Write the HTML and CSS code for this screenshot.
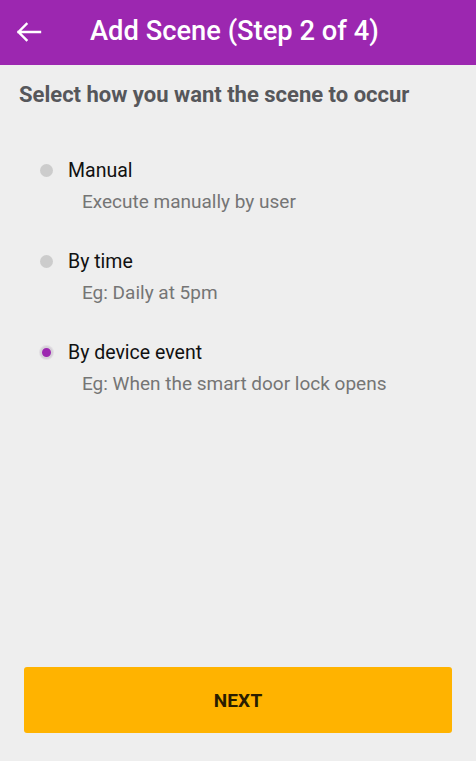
FILE: index.html
```html
<!DOCTYPE html>
<html>
<head>
<meta charset="utf-8">
<link rel="stylesheet" href="styles.css">
</head>
<body>
<div class="app">
  <header class="topbar">
    <svg class="back" width="28" height="24" viewBox="0 0 28 24">
      <path d="M3.5 12H25M11.5 4L3.5 12L11.5 20" fill="none" stroke="#fff" stroke-width="2.4" stroke-linecap="square"/>
    </svg>
    <h1 class="title">Add Scene (Step 2 of 4)</h1>
  </header>
  <main class="content">
    <h2 class="prompt">Select how you want the scene to occur</h2>
    <div class="options">
      <div class="option">
        <span class="radio"></span>
        <div class="texts">
          <div class="label">Manual</div>
          <div class="desc">Execute manually by user</div>
        </div>
      </div>
      <div class="option">
        <span class="radio"></span>
        <div class="texts">
          <div class="label">By time</div>
          <div class="desc">Eg: Daily at 5pm</div>
        </div>
      </div>
      <div class="option">
        <span class="radio checked"></span>
        <div class="texts">
          <div class="label">By device event</div>
          <div class="desc">Eg: When the smart door lock opens</div>
        </div>
      </div>
    </div>
  </main>
  <footer class="footer">
    <button class="next">NEXT</button>
  </footer>
</div>
</body>
</html>
```
FILE: styles.css
```css
* { box-sizing: border-box; }
html, body { margin: 0; padding: 0; }
body {
  background: #eeeeee;
  font-family: Roboto, "Noto Sans", sans-serif;
  width: 476px;
  height: 761px;
  overflow: hidden;
}
.app {
  display: flex;
  flex-direction: column;
  height: 761px;
}
.topbar {
  height: 65px;
  background: #9c27b0;
  display: flex;
  align-items: center;
  padding-left: 15px;
}
.back { display: block; margin-top: -2px; }
.title {
  margin: -4px 0 0 47px;
  color: #fff;
  font-size: 27.3px;
  font-weight: 500;
  line-height: 32px;
}
.content {
  flex: 1;
  padding: 16px 19px 0 19px;
}
.prompt {
  margin: 0;
  font-size: 22px;
  font-weight: 700;
  color: #56575b;
  line-height: 28px;
}
.options {
  display: flex;
  flex-direction: column;
  gap: 35px;
  margin-top: 49px;
  padding-left: 21px;
}
.option {
  display: flex;
  align-items: flex-start;
}
.radio {
  width: 13px;
  height: 13px;
  border-radius: 50%;
  background: #cccccc;
  margin-top: 6px;
  flex: none;
}
.radio.checked {
  background: #9c27b0;
  border: 2px solid #d6d0d8;
  box-shadow: 0 0 0 1px #e2dfe3;
}
.texts { margin-left: 15px; }
.label {
  font-size: 19.5px;
  color: #111;
  line-height: 26px;
}
.desc {
  margin-top: 6px;
  margin-left: 14px;
  font-size: 19px;
  color: #757575;
  line-height: 24px;
}
.footer {
  padding: 0 24px 28px 24px;
}
.next {
  width: 100%;
  height: 66px;
  border: none;
  border-radius: 3px;
  background: #ffb300;
  color: #2a1d00;
  font-family: Roboto, sans-serif;
  font-weight: 700;
  font-size: 19px;
  letter-spacing: 0.2px;
  display: block;
}
```
